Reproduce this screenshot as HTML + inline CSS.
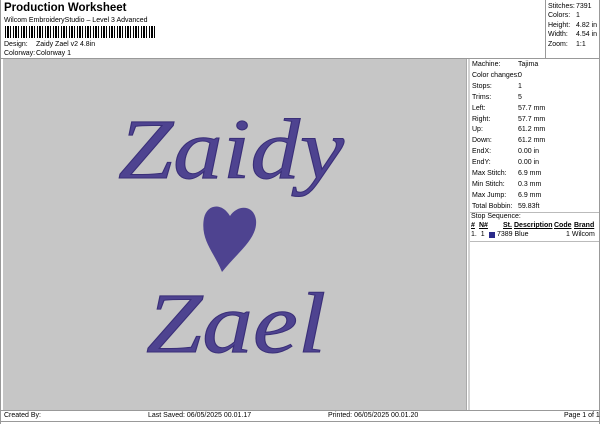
<!DOCTYPE html>
<html><head><meta charset="utf-8"><style>
*{margin:0;padding:0;box-sizing:border-box}
body{width:600px;height:424px;background:#fff;font-family:"Liberation Sans",sans-serif;font-size:7px;color:#000;position:relative;overflow:hidden}
.a{position:absolute;white-space:nowrap}
.b{position:absolute;background:#999}
</style></head><body>
<div class="a" style="left:4px;top:2px;font-size:11.5px;font-weight:bold">Production Worksheet</div>
<div class="a" style="left:4px;top:17px">Wilcom EmbroideryStudio – Level 3 Advanced</div>
<div class="a" style="left:5px;top:26px;width:150px;height:12px;background:repeating-linear-gradient(90deg,#000 0 1px,#fff 1px 2px,#000 2px 4px,#fff 4px 5px,#000 5px 6px,#fff 6px 8px)"></div>
<div class="a" style="left:4px;top:41px">Design:</div><div class="a" style="left:36px;top:41px">Zaidy Zael v2 4.8in</div>
<div class="a" style="left:4px;top:50px">Colorway:</div><div class="a" style="left:36px;top:50px">Colorway 1</div>

<div class="b" style="left:545px;top:0;width:1px;height:59px"></div>
<div class="a" style="left:548px;top:2px;line-height:9.4px">Stitches:<br>Colors:<br>Height:<br>Width:<br>Zoom:</div>
<div class="a" style="left:576px;top:2px;line-height:9.4px">7391<br>1<br>4.82 in<br>4.54 in<br>1:1</div>

<div class="a" style="left:0;top:58px;width:600px;height:1px;background:#999"></div>
<div class="a" style="left:3px;top:59px;width:464px;height:352px;background:#c6c6c6;border-right:1px solid #aaa"></div>
<div class="a" style="left:468px;top:59px;width:2px;height:352px;background:#d4d4d4"></div>
<div class="a" style="left:0;top:0;width:1px;height:424px;background:#999"></div>
<div class="a" style="left:599px;top:0;width:1px;height:424px;background:#999"></div>

<svg class="a" style="left:3px;top:59px" width="464" height="352" viewBox="3 59 464 352">
<text x="118" y="178" textLength="226" lengthAdjust="spacingAndGlyphs" font-family="Liberation Serif,serif" font-style="italic" font-size="86" fill="#4e4390" stroke="#3a2f78" stroke-width="1">Zaidy</text>
<path d="M222 272 C214 252 200 240 204 218 C207 204 222 202 230 216 C238 204 254 205 256 220 C258 238 238 252 222 272Z" fill="#4e4390"/>
<text x="146" y="352" textLength="180" lengthAdjust="spacingAndGlyphs" font-family="Liberation Serif,serif" font-style="italic" font-size="86" fill="#4e4390" stroke="#3a2f78" stroke-width="1">Zael</text>
</svg>

<div class="a" style="left:472px;top:60px;line-height:10.9px">Machine:<br>Color changes:<br>Stops:<br>Trims:<br>Left:<br>Right:<br>Up:<br>Down:<br>EndX:<br>EndY:<br>Max Stitch:<br>Min Stitch:<br>Max Jump:<br>Total Bobbin:</div>
<div class="a" style="left:518px;top:60px;line-height:10.9px">Tajima<br>0<br>1<br>5<br>57.7 mm<br>57.7 mm<br>61.2 mm<br>61.2 mm<br>0.00 in<br>0.00 in<br>6.9 mm<br>0.3 mm<br>6.9 mm<br>59.83ft</div>
<div class="a" style="left:470px;top:212px;width:129px;height:1px;background:#bbb"></div>
<div class="a" style="left:471px;top:213px">Stop Sequence:</div>
<div class="a" style="left:471px;top:222px;font-weight:bold;text-decoration:underline">#</div>
<div class="a" style="left:479px;top:222px;font-weight:bold;text-decoration:underline">N#</div>
<div class="a" style="left:503px;top:222px;font-weight:bold;text-decoration:underline">St.</div>
<div class="a" style="left:514px;top:222px;font-weight:bold;text-decoration:underline">Description</div>
<div class="a" style="left:554px;top:222px;font-weight:bold;text-decoration:underline">Code</div>
<div class="a" style="left:574px;top:222px;font-weight:bold;text-decoration:underline">Brand</div>
<div class="a" style="left:471px;top:231px">1.&nbsp; 1</div>
<div class="a" style="left:489px;top:232px;width:6px;height:6px;background:#2a2a8a"></div>
<div class="a" style="left:497px;top:231px">7389 Blue</div>
<div class="a" style="left:566px;top:231px">1 Wilcom</div>
<div class="a" style="left:470px;top:241px;width:129px;height:1px;background:#bbb"></div>

<div class="a" style="left:0;top:410px;width:600px;height:1px;background:#999"></div>
<div class="a" style="left:0;top:421px;width:600px;height:1px;background:#999"></div>
<div class="a" style="left:4px;top:412px">Created By:</div>
<div class="a" style="left:148px;top:412px">Last Saved: 06/05/2025 00.01.17</div>
<div class="a" style="left:328px;top:412px">Printed: 06/05/2025 00.01.20</div>
<div class="a" style="left:564px;top:412px">Page 1 of 1</div>
</body></html>
